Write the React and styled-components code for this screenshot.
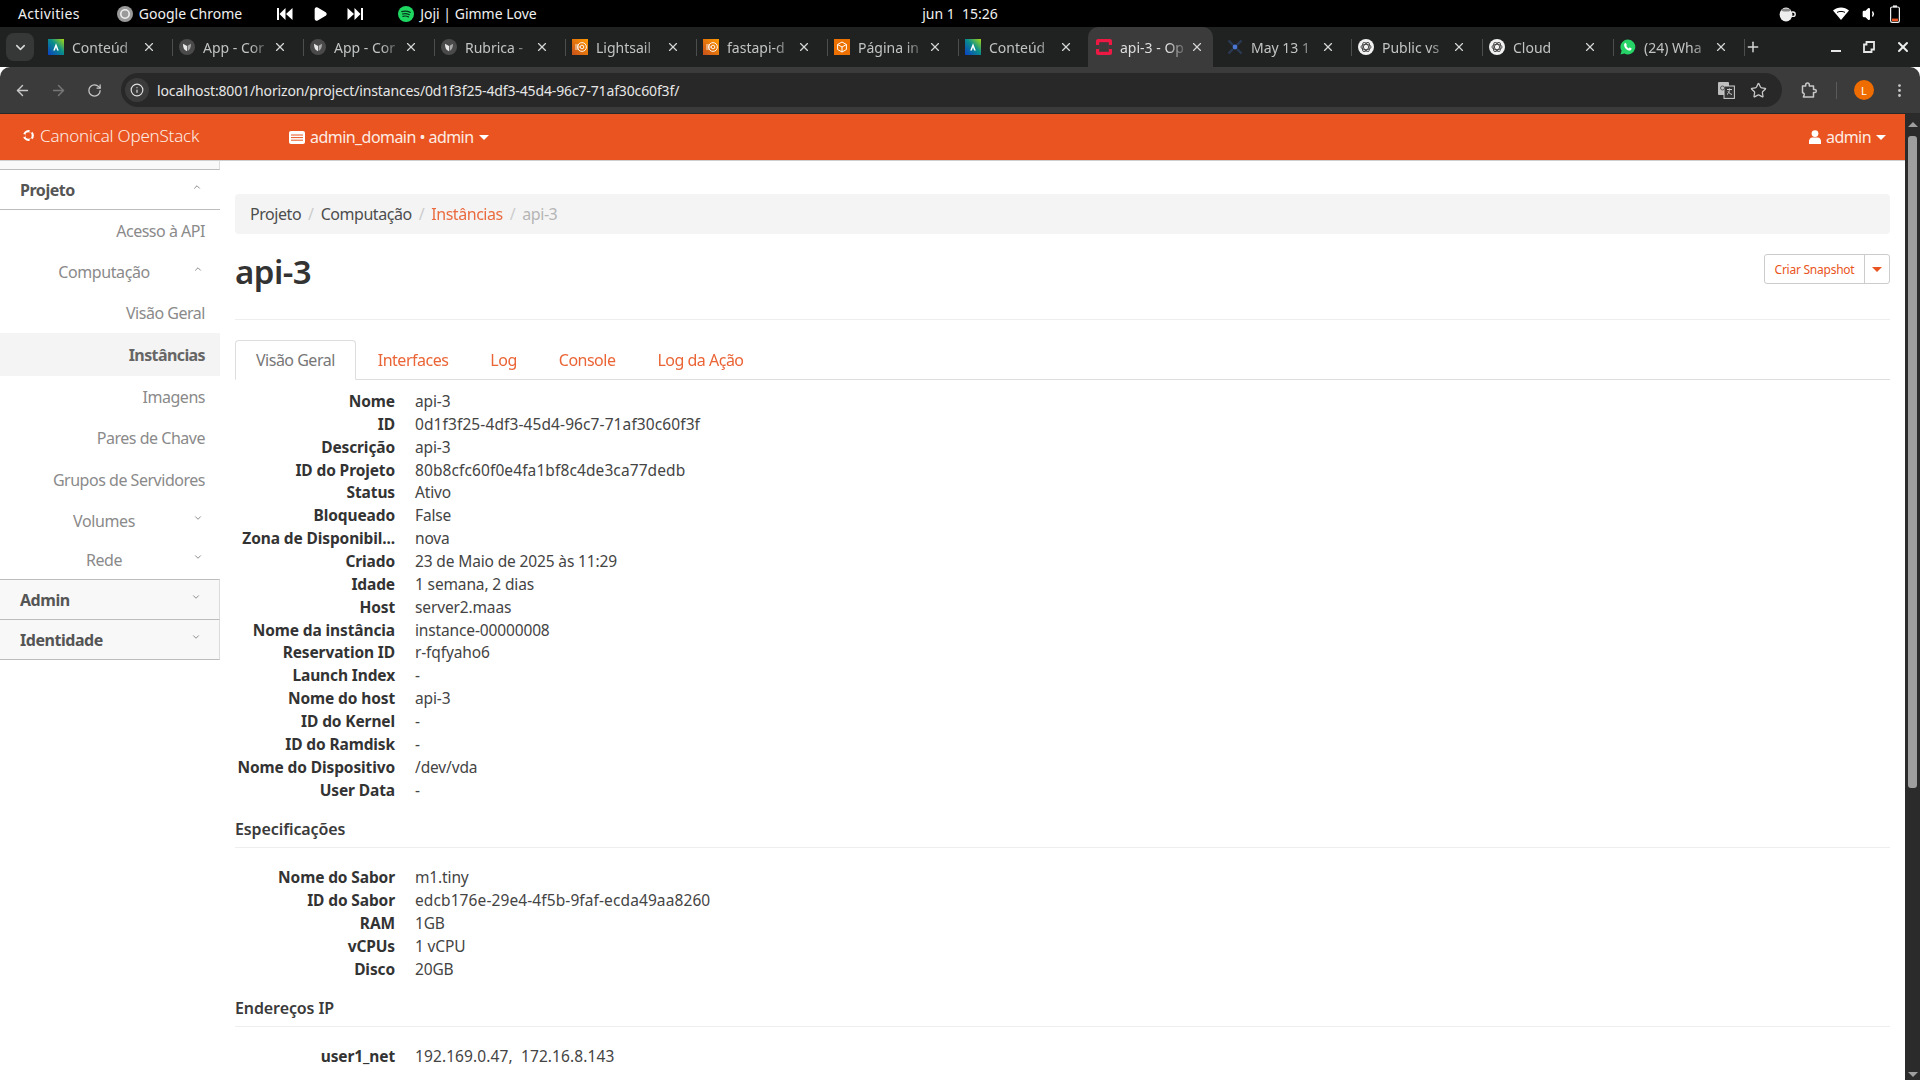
import React from 'react';
import styled, { createGlobalStyle } from 'styled-components';
import { ArrowLeft, ArrowRight, RotateCw, Info, Star, EllipsisVertical, X, Plus, ChevronDown, ChevronUp, Play, Volume1 } from 'lucide-react';

const FONT = '"Noto Sans", "Open Sans", sans-serif';

const GlobalStyle = createGlobalStyle`
  html, body { margin: 0; padding: 0; background: #fff; overflow: hidden; }
  * { box-sizing: border-box; }
  body { font-family: ${FONT}; font-size: 15px; color: #333; }
`;

const Screen = styled.div`
  width: 1920px;
  height: 1080px;
  display: flex;
  flex-direction: column;
  overflow: hidden;
`;

/* gnome bar */
const TopBar = styled.div`
  height: 27px;
  flex: none;
  background: #000;
  color: #f0f0f0;
  font-size: 14px;
  display: grid;
  grid-template-columns: 1fr auto 1fr;
  align-items: center;
`;
const BarLeft = styled.div`display: flex; align-items: center; padding-left: 18px;`;
const BarRight = styled.div`display: flex; align-items: center; justify-content: flex-end; padding-right: 20px;`;
const BarLabel = styled.span`
  margin-left: ${p => p.$ml || 0}px;
  letter-spacing: ${p => p.$ls || 0}px;
  white-space: pre;
`;
const BarIcon = styled.span`
  display: flex;
  margin-left: ${p => p.$ml || 0}px;
`;

/* tab strip */
const TabStrip = styled.div`
  height: 40px;
  flex: none;
  background: #202222;
  display: flex;
  align-items: flex-start;
`;
const TabMenu = styled.div`
  width: 28px;
  height: 28px;
  margin: 6px 8px 0 6px;
  border-radius: 8px;
  background: #363838;
  color: #d8d8d8;
  display: flex;
  align-items: center;
  justify-content: center;
`;
const Tab = styled.div`
  width: 131px;
  height: 40px;
  flex: none;
  padding-left: ${p => p.$active ? 8 : 6}px;
  display: flex;
  align-items: center;
  position: relative;
  background: ${p => p.$active ? '#3b3b3b' : 'transparent'};
  border-radius: ${p => p.$active ? '10px 10px 0 0' : '0'};
  ${p => p.$active ? 'width: 125px; margin: 0 8px 0 -2px;' : ''}
  ${p => p.$sep ? `
    &::after {
      content: '';
      position: absolute;
      right: 0;
      top: 12px;
      width: 1px;
      height: 17px;
      background: #4c4e4e;
    }
  ` : ''}
`;
const TabFav = styled.span`
  width: 16px;
  height: 16px;
  flex: none;
  display: flex;
`;
const TabTitle = styled.span`
  width: 66px;
  margin-left: 8px;
  flex: none;
  font-size: 14px;
  color: ${p => p.$active ? '#dedede' : '#c2c4c4'};
  white-space: nowrap;
  overflow: hidden;
  -webkit-mask-image: linear-gradient(to right, #000 72%, rgba(0,0,0,.15) 100%);
  mask-image: linear-gradient(to right, #000 72%, rgba(0,0,0,.15) 100%);
`;
const TabClose = styled.span`
  display: flex;
  margin-left: 4px;
  color: #d6d6d6;
`;
const NewTab = styled.span`
  display: flex;
  margin: 12px 0 0 0;
  color: #d6d6d6;
`;
const WindowButtons = styled.div`
  margin-left: auto;
  height: 40px;
  display: flex;
  align-items: center;
`;
const WinMin = styled.span`
  width: 10px;
  height: 2px;
  margin: 7px 0 0 0;
  background: #e6e6e6;
`;
const WinMax = styled.span`
  display: flex;
  margin-left: 22px;
`;
const WinClose = styled.span`
  display: flex;
  margin: 0 9px 0 20px;
  color: #eee;
`;

/* address bar */
const Toolbar = styled.div`
  height: 46px;
  flex: none;
  background: #3b3b3b;
  border-radius: 10px 10px 0 0;
  display: flex;
  align-items: center;
  color: #c8c8c8;
`;
const ToolBtn = styled.span`
  display: flex;
  width: 36px;
  margin-left: ${p => p.$ml || 0}px;
  justify-content: center;
  color: ${p => p.$dim ? '#777' : '#c8c8c8'};
`;
const Omnibox = styled.div`
  width: 1661px;
  height: 34px;
  margin-left: 9px;
  border-radius: 17px;
  background: #282828;
  display: flex;
  align-items: center;
  padding-left: 4px;
  padding-right: 15px;
`;
const InfoBadge = styled.span`
  width: 24px;
  height: 24px;
  flex: none;
  border-radius: 50%;
  background: #3b3b3b;
  color: #e0e0e0;
  display: flex;
  align-items: center;
  justify-content: center;
`;
const UrlText = styled.span`
  margin-left: 8px;
  font-size: 14px;
  letter-spacing: -0.14px;
  color: #e6e6e6;
  white-space: nowrap;
`;
const OmniRight = styled.div`
  margin-left: auto;
  display: flex;
  align-items: center;
  gap: 15px;
`;
const ToolDivider = styled.span`
  width: 1px;
  height: 17px;
  margin: 0 17px 0 9px;
  background: #5a5a5a;
`;
const Avatar = styled.span`
  width: 20px;
  height: 20px;
  border-radius: 50%;
  background: #ef6c00;
  color: #fff;
  font-size: 11px;
  display: flex;
  align-items: center;
  justify-content: center;
`;

/* page */
const Viewport = styled.div`
  flex: 1;
  min-height: 0;
  display: flex;
  background: #fff;
  border-top: 1px solid #2a2a2a;
`;
const Page = styled.div`
  flex: 1;
  min-width: 0;
  display: flex;
  flex-direction: column;
`;
const OrangeBar = styled.header`
  height: 47px;
  flex: none;
  background: #e95420;
  border-bottom: 1px solid #cfcfcf;
  color: #fff;
  display: flex;
  align-items: center;
  padding-left: 22px;
  padding-right: 19px;
`;
const Brand = styled.span`
  display: flex;
  align-items: center;
  gap: 5px;
  font-size: 17px;
  letter-spacing: -0.2px;
  font-weight: 300;
  margin-top: -4px;
  width: 267px;
  color: #fdece4;
`;
const DomainMenu = styled.span`
  display: flex;
  align-items: center;
  gap: 5px;
  font-size: 16px;
  letter-spacing: -0.55px;
  color: #fdece4;
`;
const UserMenu = styled(DomainMenu)`
  margin-left: auto;
`;
const Caret = styled.span`
  width: 0;
  height: 0;
  border-left: 5px solid transparent;
  border-right: 5px solid transparent;
  border-top: 5px solid ${p => p.$color || '#fff'};
`;

const Body = styled.div`
  flex: 1;
  min-height: 0;
  display: flex;
`;
const Sidebar = styled.nav`
  width: 220px;
  flex: none;
  font-size: 16px;
  color: #777;
`;
const SideCap = styled.div`
  height: 9px;
  background: #f9f9f9;
  border-bottom: 1px solid #bdbdbd;
  border-right: 1px solid #dcdcdc;
`;
const SideHeader = styled.div`
  height: ${p => p.$h}px;
  display: flex;
  align-items: center;
  justify-content: space-between;
  padding: 0 18px 0 20px;
  font-weight: 700;
  font-size: 16px;
  letter-spacing: -0.45px;
  color: #555;
  background: ${p => p.$open ? '#fff' : '#f8f8f8'};
  border-bottom: 1px solid #bdbdbd;
  ${p => p.$first ? 'border-top: 1px solid #bdbdbd;' : ''}
  ${p => p.$open ? '' : 'border-right: 1px solid #dcdcdc;'}
`;
const SideItem = styled.div`
  height: ${p => p.$h}px;
  display: flex;
  align-items: center;
  justify-content: flex-end;
  padding-right: 15px;
  letter-spacing: ${p => p.$active ? -0.6 : -0.48}px;
  font-weight: ${p => p.$active ? 700 : 400};
  color: ${p => p.$active ? '#666' : '#8a8a8a'};
  background: ${p => p.$active ? '#f4f4f4' : 'transparent'};
`;
const SideGroup = styled.div`
  height: ${p => p.$h}px;
  display: flex;
  align-items: center;
  padding-left: 15px;
  letter-spacing: -0.4px;
  color: #8a8a8a;
`;
const SideGroupText = styled.span`
  width: 178px;
  text-align: center;
`;
const Chevron = styled.span`
  display: flex;
  margin-top: -6px;
  color: #777;
`;

const Main = styled.main`
  flex: 1;
  min-width: 0;
  padding: 33px 15px 0 15px;
  overflow: hidden;
`;
const Breadcrumb = styled.ol`
  list-style: none;
  height: 40px;
  margin: 0;
  padding: 0 15px;
  background: #f4f4f4;
  border-radius: 4px;
  display: flex;
  align-items: center;
  font-size: 16px;
  letter-spacing: -0.45px;
`;
const Crumb = styled.li`
  color: ${p => p.$tone === 'link' ? '#e95420' : p.$tone === 'muted' ? '#b5b5b5' : '#4d4d4d'};
  opacity: ${p => p.$tone === 'link' ? 0.85 : 1};
`;
const CrumbSep = styled.li`
  color: #ccc;
  padding: 0 7px;
`;
const TitleRow = styled.div`
  height: 86px;
  border-bottom: 1px solid #eee;
  display: flex;
  justify-content: space-between;
  align-items: flex-start;
`;
const Title = styled.h1`
  margin: 16px 0 0 0;
  font-size: 33px;
  line-height: 44px;
  font-weight: 600;
  letter-spacing: -0.5px;
  color: #333;
`;
const ActionGroup = styled.div`
  display: flex;
  margin-top: 20px;
  height: 30px;
  border: 1px solid #ccc;
  border-radius: 3px;
  color: #e95420;
  font-size: 12px;
`;
const ActionMain = styled.span`
  width: 100px;
  border-right: 1px solid #ccc;
  display: flex;
  align-items: center;
  justify-content: center;
  letter-spacing: -0.25px;
`;
const ActionCaret = styled.span`
  width: 24px;
  display: flex;
  align-items: center;
  justify-content: center;
`;
const Tabs = styled.div`
  margin-top: 20px;
  height: 40px;
  display: flex;
  border-bottom: 1px solid #ddd;
  font-size: 16px;
  letter-spacing: -0.5px;
`;
const PageTab = styled.span`
  height: ${p => p.$active ? 40 : 39}px;
  padding: 0 20px;
  margin-right: 2px;
  display: flex;
  align-items: center;
  color: ${p => p.$active ? '#777' : '#e95420'};
  background: #fff;
  ${p => p.$active ? 'border: 1px solid #ddd; border-bottom-color: #fff; border-radius: 4px 4px 0 0;' : 'opacity: .9;'}
`;
const DefList = styled.dl`
  margin: ${p => p.$mt}px 0 0 0;
  display: grid;
  grid-template-columns: 160px 1fr;
  column-gap: 20px;
  font-size: 15.5px;
  line-height: 22.86px;
`;
const DefTerm = styled.dt`
  font-weight: 700;
  text-align: right;
  letter-spacing: -0.12px;
  white-space: nowrap;
  color: #333;
`;
const DefValue = styled.dd`
  margin: 0;
  color: #444;
  white-space: pre;
  letter-spacing: ${p => p.$hex ? 0.1 : -0.14}px;
`;
const SectionHead = styled.h4`
  margin: ${p => p.$mt}px 0 0 0;
  height: 30px;
  border-bottom: 1px solid #eee;
  font-size: 16px;
  line-height: 22px;
  font-weight: 600;
  letter-spacing: -0.1px;
  color: #3a3a3a;
`;

const Scrollbar = styled.div`
  width: 15px;
  flex: none;
  background: #2b2b2b;
  display: flex;
  flex-direction: column;
  align-items: center;
  padding-top: 4px;
`;
const ScrollUp = styled.span`
  width: 0;
  height: 0;
  border-left: 5px solid transparent;
  border-right: 5px solid transparent;
  border-bottom: 5px solid #9e9e9e;
  margin-top: 4px;
`;
const ScrollDown = styled.span`
  width: 0;
  height: 0;
  border-left: 5px solid transparent;
  border-right: 5px solid transparent;
  border-top: 5px solid #9e9e9e;
  margin-top: auto;
  margin-bottom: 3px;
`;
const ScrollThumb = styled.span`
  width: 9px;
  height: 652px;
  margin-top: 9px;
  border-radius: 3px;
  background: #9e9e9e;
`;

/* favicons */
const Gradient = ({ id, a, b }) => (
  <linearGradient id={id} x1="0" y1="1" x2="1" y2="0">
    <stop offset="0" stopColor={a} />
    <stop offset="1" stopColor={b} />
  </linearGradient>
);

const AzIcon = ({ id }) => (
  <svg width="16" height="16" viewBox="0 0 16 16">
    <defs>
      <linearGradient id={id} x1="0" y1="1" x2="1" y2="0">
        <stop offset="0" stopColor="#0b3fc4" />
        <stop offset=".55" stopColor="#0a8f8a" />
        <stop offset="1" stopColor="#a6d815" />
      </linearGradient>
    </defs>
    <rect width="16" height="16" fill={`url(#${id})`} />
    <path d="M8 4.2 5.2 11.5h1.7L8 8.2l1.1 3.3h1.7z" fill="#fff" />
  </svg>
);

const MintIcon = () => (
  <svg width="16" height="16" viewBox="0 0 16 16">
    <circle cx="8" cy="8" r="8" fill="#4a4a4a" />
    <path d="M4 4.8 8 7v5.2C5.6 11.4 4 9.4 4 4.8z" fill="#e8e8e8" />
    <path d="M12 4.8 8.6 6.7v5.3c2-.9 3.4-3 3.4-7.2z" fill="#a9a9a9" />
  </svg>
);

const SailIcon = ({ id }) => (
  <svg width="16" height="16" viewBox="0 0 16 16">
    <defs><Gradient id={id} a="#c8511b" b="#ff9900" /></defs>
    <rect width="16" height="16" fill={`url(#${id})`} />
    <circle cx="10" cy="8" r="4.4" fill="none" stroke="#fff" strokeWidth=".9" />
    <circle cx="10" cy="8" r="1.8" fill="none" stroke="#fff" strokeWidth=".9" />
    <path d="M3 6h4M3 8h5M3 10h4" stroke="#fff" strokeWidth=".8" />
  </svg>
);

const CubeIcon = () => (
  <svg width="16" height="16" viewBox="0 0 16 16">
    <rect width="16" height="16" fill="#ed7100" />
    <path d="M8 3 12.4 5.5v5L8 13l-4.4-2.5v-5zM3.6 5.5 8 8l4.4-2.5M8 8v5" fill="none" stroke="#fff" strokeWidth="1" />
  </svg>
);

const StackIcon = () => (
  <svg width="16" height="16" viewBox="0 0 16 16">
    <rect width="16" height="16" rx="2" fill="#ed1944" />
    <rect x="3.2" y="3.2" width="9.6" height="9.6" fill="#3b3b3b" />
    <rect x="0" y="6" width="3.2" height="4" fill="#3b3b3b" />
    <rect x="12.8" y="6" width="3.2" height="4" fill="#3b3b3b" />
  </svg>
);

const MayIcon = () => (
  <svg width="16" height="16" viewBox="0 0 16 16">
    <path d="M1.5 1.5 6 6M14.5 1.5 10 6M1.5 14.5 6 10M14.5 14.5 10 10" stroke="#2a3a55" strokeWidth="2.4" />
    <circle cx="8" cy="8" r="2.4" fill="#4a76d4" />
  </svg>
);

const GptIcon = () => (
  <svg width="16" height="16" viewBox="0 0 16 16">
    <circle cx="8" cy="8" r="8" fill="#f2f2f2" />
    <g fill="none" stroke="#444" strokeWidth=".9">
      <ellipse cx="8" cy="8" rx="5" ry="2.6" />
      <ellipse cx="8" cy="8" rx="5" ry="2.6" transform="rotate(60 8 8)" />
      <ellipse cx="8" cy="8" rx="5" ry="2.6" transform="rotate(120 8 8)" />
    </g>
  </svg>
);

const WhatsIcon = () => (
  <svg width="16" height="16" viewBox="0 0 16 16">
    <path d="M8 .4a7.5 7.5 0 0 0-6.4 11.4L.5 15.6l3.9-1A7.5 7.5 0 1 0 8 .4z" fill="#25d366" />
    <path d="M5.6 4.2c.3 0 .5 0 .6.4l.6 1.4c0 .2 0 .4-.1.5l-.5.6c.5 1 1.4 1.8 2.5 2.3l.7-.7c.1-.2.3-.2.5-.1l1.4.7c.2.1.3.3.3.5 0 1-.9 1.8-2 1.8-2.8-.2-5.4-2.8-5.5-5.6 0-1.1.7-2.2 1.5-2.2z" fill="#fff" />
  </svg>
);

const PrevIcon = () => (
  <svg width="16" height="12" viewBox="0 0 16 12">
    <path d="M0 0h2v12H0zM8.5 0v12L2.5 6zM15.5 0v12L9 6z" fill="#fff" />
  </svg>
);

const NextIcon = () => (
  <svg width="16" height="12" viewBox="0 0 16 12">
    <path d="M16 0h-2v12h2zM7.5 0v12l6-6zM.5 0v12L7 6z" fill="#fff" />
  </svg>
);

const ExtensionIcon = () => (
  <svg width="17" height="17" viewBox="0 0 17 17">
    <path d="M1.5 4h3.2V2.8a1.8 1.8 0 0 1 3.6 0V4h4.2v3.4h1.2a1.6 1.6 0 0 1 0 3.2h-1.2V15H2.4l.8-2.2c.3-1-.4-2-1.7-2z" fill="none" stroke="#c8c8c8" strokeWidth="1.5" strokeLinejoin="round" />
  </svg>
);

const TABS = [
  { title: 'Conteúd', icon: <AzIcon id="az1" />, sep: true },
  { title: 'App - Cor', icon: <MintIcon />, sep: true },
  { title: 'App - Cor', icon: <MintIcon />, sep: true },
  { title: 'Rubrica -', icon: <MintIcon />, sep: true },
  { title: 'Lightsail', icon: <SailIcon id="ls1" />, sep: true },
  { title: 'fastapi-d', icon: <SailIcon id="ls2" />, sep: true },
  { title: 'Página in', icon: <CubeIcon />, sep: true },
  { title: 'Conteúd', icon: <AzIcon id="az2" /> },
  { title: 'api-3 - Op', icon: <StackIcon />, active: true },
  { title: 'May 13 1', icon: <MayIcon />, sep: true },
  { title: 'Public vs', icon: <GptIcon />, sep: true },
  { title: 'Cloud', icon: <GptIcon />, sep: true },
  { title: '(24) Wha', icon: <WhatsIcon />, sep: true },
];

const OVERVIEW = [
  ['Nome', 'api-3'],
  ['ID', '0d1f3f25-4df3-45d4-96c7-71af30c60f3f', true],
  ['Descrição', 'api-3'],
  ['ID do Projeto', '80b8cfc60f0e4fa1bf8c4de3ca77dedb', true],
  ['Status', 'Ativo'],
  ['Bloqueado', 'False'],
  ['Zona de Disponibil...', 'nova'],
  ['Criado', '23 de Maio de 2025 às 11:29'],
  ['Idade', '1 semana, 2 dias'],
  ['Host', 'server2.maas'],
  ['Nome da instância', 'instance-00000008'],
  ['Reservation ID', 'r-fqfyaho6'],
  ['Launch Index', '-'],
  ['Nome do host', 'api-3'],
  ['ID do Kernel', '-'],
  ['ID do Ramdisk', '-'],
  ['Nome do Dispositivo', '/dev/vda'],
  ['User Data', '-'],
];

const SPECS = [
  ['Nome do Sabor', 'm1.tiny'],
  ['ID do Sabor', 'edcb176e-29e4-4f5b-9faf-ecda49aa8260', true],
  ['RAM', '1GB'],
  ['vCPUs', '1 vCPU'],
  ['Disco', '20GB'],
];

function Details({ rows, mt }) {
  return (
    <DefList $mt={mt}>
      {rows.map(([k, v, hex]) => (
        <React.Fragment key={k}>
          <DefTerm>{k}</DefTerm>
          <DefValue $hex={hex}>{v}</DefValue>
        </React.Fragment>
      ))}
    </DefList>
  );
}

export default function App() {
  return (
    <Screen>
      <GlobalStyle />
      <TopBar>
        <BarLeft>
          <BarLabel $ls={0.35}>Activities</BarLabel>
          <BarIcon $ml={37}>
            <svg width="16" height="16" viewBox="0 0 16 16">
              <circle cx="8" cy="8" r="8" fill="#9a9a9a" />
              <circle cx="8" cy="8" r="4.2" fill="none" stroke="#eee" strokeWidth="1.6" />
            </svg>
          </BarIcon>
          <BarLabel $ml={6}>Google Chrome</BarLabel>
          <BarIcon $ml={35}><PrevIcon /></BarIcon>
          <BarIcon $ml={19}><Play size={16} fill="#fff" color="#fff" /></BarIcon>
          <BarIcon $ml={19}><NextIcon /></BarIcon>
          <BarIcon $ml={35}>
            <svg width="16" height="16" viewBox="0 0 16 16">
              <circle cx="8" cy="8" r="8" fill="#1ed760" />
              <path d="M3.8 5.6c2.8-.8 5.8-.6 8.4.8M4.4 8c2.3-.6 4.8-.4 7 .7M4.9 10.3c1.9-.5 3.9-.3 5.6.6" fill="none" stroke="#06351a" strokeWidth="1.2" strokeLinecap="round" />
            </svg>
          </BarIcon>
          <BarLabel $ml={6}>Joji | Gimme Love</BarLabel>
        </BarLeft>
        <BarLabel>{'jun 1  15:26'}</BarLabel>
        <BarRight>
          <BarIcon>
            <svg width="17" height="16" viewBox="0 0 17 16">
              <ellipse cx="7" cy="8.6" rx="6.4" ry="7" fill="#eee" />
              <ellipse cx="7" cy="4" rx="4.6" ry="1.6" fill="#888" />
              <path d="M13 6h1a2 2 0 0 1 0 4.4h-1.4" fill="none" stroke="#eee" strokeWidth="1.4" />
            </svg>
          </BarIcon>
          <BarIcon $ml={37}>
            <svg width="16" height="14" viewBox="0 0 16 14">
              <path d="M0 3.5C4.5-.6 11.5-.6 16 3.5L8 13z" fill="#fff" />
              <path d="M4 5.4c2.4-1.3 5.6-1.3 8 0" fill="none" stroke="#000" strokeWidth="1" />
            </svg>
          </BarIcon>
          <BarIcon $ml={13}><Volume1 size={16} color="#fff" fill="#fff" /></BarIcon>
          <BarIcon $ml={12}>
            <svg width="10" height="18" viewBox="0 0 10 18">
              <rect x=".6" y="2" width="8.8" height="15.4" rx="1.6" fill="none" stroke="#eee" strokeWidth="1.2" />
              <rect x="3" y=".4" width="4" height="2" fill="#eee" />
              <rect x="2" y="13.6" width="6" height="2.6" fill="#e95420" />
            </svg>
          </BarIcon>
        </BarRight>
      </TopBar>

      <TabStrip>
        <TabMenu><ChevronDown size={15} strokeWidth={2.4} /></TabMenu>
        {TABS.map((t, i) => (
          <Tab key={i} $active={t.active} $sep={t.sep}>
            <TabFav>{t.icon}</TabFav>
            <TabTitle $active={t.active}>{t.title}</TabTitle>
            <TabClose><X size={14} strokeWidth={2} /></TabClose>
          </Tab>
        ))}
        <NewTab><Plus size={16} strokeWidth={2.2} /></NewTab>
        <WindowButtons>
          <WinMin />
          <WinMax>
            <svg width="12" height="12" viewBox="0 0 12 12">
              <path d="M3.5 1h7.5v7.5H8.5V11H1V3.5h2.5z" fill="none" stroke="#e6e6e6" strokeWidth="1.8" />
            </svg>
          </WinMax>
          <WinClose><X size={16} strokeWidth={3} /></WinClose>
        </WindowButtons>
      </TabStrip>

      <Toolbar>
        <ToolBtn $ml={4}><ArrowLeft size={17} /></ToolBtn>
        <ToolBtn $dim><ArrowRight size={17} /></ToolBtn>
        <ToolBtn><RotateCw size={15} /></ToolBtn>
        <Omnibox>
          <InfoBadge><Info size={14} /></InfoBadge>
          <UrlText>localhost:8001/horizon/project/instances/0d1f3f25-4df3-45d4-96c7-71af30c60f3f/</UrlText>
          <OmniRight>
            <svg width="17" height="17" viewBox="0 0 17 17">
              <rect x="0" y="0" width="11" height="13" rx="1" fill="#bdbdbd" />
              <rect x="6" y="4" width="10.4" height="12.4" fill="#333" stroke="#cfcfcf" />
              <path d="M9 7.5h5M11.5 6.5c0 3-1 5-2.5 6M10 9.5c1 1.5 2.5 2.5 4 3" fill="none" stroke="#cfcfcf" />
              <circle cx="4.5" cy="6" r="2" fill="none" stroke="#555" />
            </svg>
            <Star size={17} strokeWidth={1.8} />
          </OmniRight>
        </Omnibox>
        <ToolBtn $ml={9}><ExtensionIcon /></ToolBtn>
        <ToolDivider />
        <Avatar>L</Avatar>
        <ToolBtn $ml={7}><EllipsisVertical size={17} /></ToolBtn>
      </Toolbar>

      <Viewport>
        <Page>
          <OrangeBar>
            <Brand>
              <svg width="13" height="13" viewBox="0 0 13 13">
                <circle cx="6.5" cy="6.5" r="4.3" fill="none" stroke="#fff" strokeWidth="2.2" />
                <circle cx="1.8" cy="6.5" r="1.5" fill="#e95420" />
                <circle cx="9" cy="2.2" r="1.5" fill="#e95420" />
                <circle cx="9" cy="10.8" r="1.5" fill="#e95420" />
              </svg>
              Canonical OpenStack
            </Brand>
            <DomainMenu>
              <svg width="16" height="13" viewBox="0 0 16 13">
                <rect width="16" height="13" rx="2" fill="#fff" />
                <path d="M2 4h12M2 6.6h12M2 9.2h12" stroke="#e95420" strokeWidth="1" />
              </svg>
              admin_domain • admin
              <Caret />
            </DomainMenu>
            <UserMenu>
              <svg width="12" height="14" viewBox="0 0 12 14">
                <circle cx="6" cy="3.6" r="3.4" fill="#fff" />
                <path d="M0 14v-3c0-2 1.8-3.6 3-3.6h6c1.2 0 3 1.6 3 3.6v3z" fill="#fff" />
              </svg>
              admin
              <Caret />
            </UserMenu>
          </OrangeBar>

          <Body>
            <Sidebar>
              <SideCap />
              <SideHeader $h={40} $open>Projeto<Chevron><ChevronUp size={10} strokeWidth={2} /></Chevron></SideHeader>
              <SideItem $h={42}>Acesso à API</SideItem>
              <SideGroup $h={40}><SideGroupText>Computação</SideGroupText><Chevron><ChevronUp size={10} strokeWidth={2} /></Chevron></SideGroup>
              <SideItem $h={41}>Visão Geral</SideItem>
              <SideItem $h={43} $active>Instâncias</SideItem>
              <SideItem $h={41}>Imagens</SideItem>
              <SideItem $h={42}>Pares de Chave</SideItem>
              <SideItem $h={42}>Grupos de Servidores</SideItem>
              <SideGroup $h={40}><SideGroupText>Volumes</SideGroupText><Chevron><ChevronDown size={10} strokeWidth={2} /></Chevron></SideGroup>
              <SideGroup $h={38}><SideGroupText>Rede</SideGroupText><Chevron><ChevronDown size={10} strokeWidth={2} /></Chevron></SideGroup>
              <SideHeader $h={41} $first>Admin<Chevron><ChevronDown size={10} strokeWidth={2} /></Chevron></SideHeader>
              <SideHeader $h={40}>Identidade<Chevron><ChevronDown size={10} strokeWidth={2} /></Chevron></SideHeader>
            </Sidebar>

            <Main>
              <Breadcrumb>
                <Crumb>Projeto</Crumb>
                <CrumbSep>/</CrumbSep>
                <Crumb>Computação</Crumb>
                <CrumbSep>/</CrumbSep>
                <Crumb $tone="link">Instâncias</Crumb>
                <CrumbSep>/</CrumbSep>
                <Crumb $tone="muted">api-3</Crumb>
              </Breadcrumb>
              <TitleRow>
                <Title>api-3</Title>
                <ActionGroup>
                  <ActionMain>Criar Snapshot</ActionMain>
                  <ActionCaret><Caret $color="#e95420" /></ActionCaret>
                </ActionGroup>
              </TitleRow>
              <Tabs>
                <PageTab $active>Visão Geral</PageTab>
                <PageTab>Interfaces</PageTab>
                <PageTab>Log</PageTab>
                <PageTab>Console</PageTab>
                <PageTab>Log da Ação</PageTab>
              </Tabs>
              <Details rows={OVERVIEW} mt={10} />
              <SectionHead $mt={17}>Especificações</SectionHead>
              <Details rows={SPECS} mt={18} />
              <SectionHead $mt={16}>Endereços IP</SectionHead>
              <Details rows={[['user1_net', '192.169.0.47,  172.16.8.143', true]]} mt={18} />
            </Main>
          </Body>
        </Page>
        <Scrollbar>
          <ScrollUp />
          <ScrollThumb />
          <ScrollDown />
        </Scrollbar>
      </Viewport>
    </Screen>
  );
}
